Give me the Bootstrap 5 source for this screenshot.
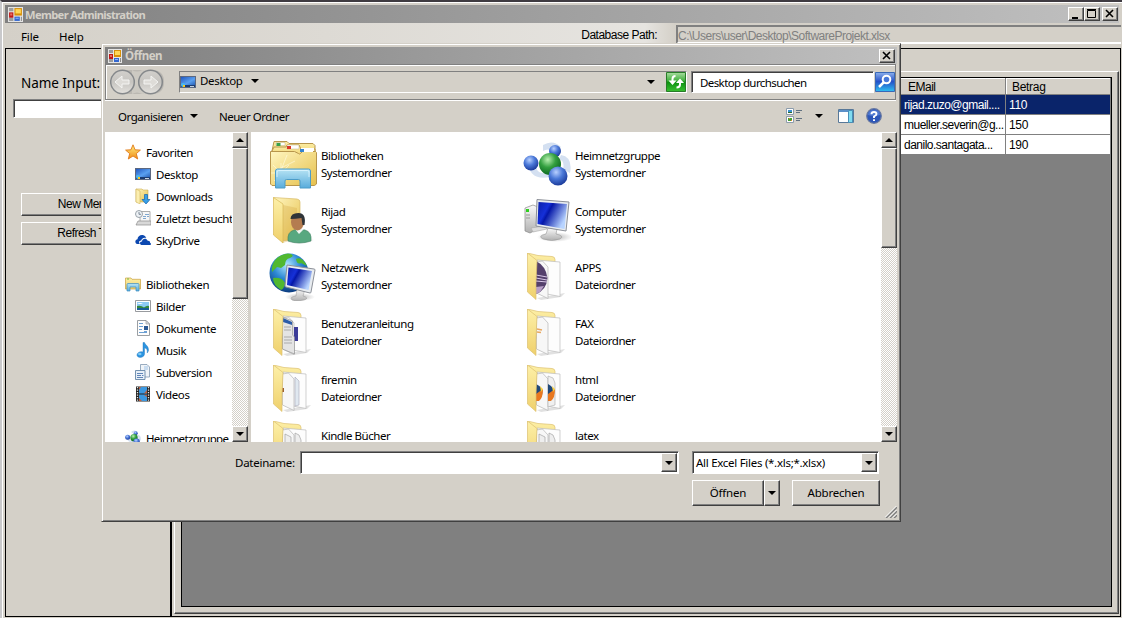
<!DOCTYPE html>
<html lang="de">
<head>
<meta charset="utf-8">
<title>Member Administration</title>
<meta name="viewport" content="width=device-width, initial-scale=1">
<link href="https://cdn.jsdelivr.net/npm/bootstrap@5.3.0/dist/css/bootstrap.min.css" rel="stylesheet">
<style>
:root{--face:#d4d0c8;--ui:"Noto Sans","Open Sans",sans-serif;--grid:"Liberation Sans",Arial,sans-serif}
body{width:1122px;height:618px;overflow:hidden;background:#d4d0c8;color:#000;font:11.5px/17px var(--ui);letter-spacing:-.45px;white-space:nowrap}
svg{flex:none;display:block}
.app{width:1122px;height:618px;border-top:2px solid #3f3b41;border-left:2px solid #c9c9cb}
.frame{border:1px solid #fff;border-right:0;border-bottom:0;padding:2px 1px 0 2px;background:var(--face)}
.caption{height:18px;background:linear-gradient(90deg,#808080,#c0c0c0);color:var(--face);font-weight:700;padding:0 2px 0 3px;gap:2px}
.frame>.caption{margin-right:2px;padding:0 1px 0 3px}
.cap-btn{width:16px;height:14px}
.raised{background:var(--face);border:1px solid;border-color:#fff #404040 #404040 #fff;box-shadow:inset -1px -1px #808080}
.sunken{background:#fff;border:1px solid;border-color:#808080 #fff #fff #808080;box-shadow:inset 1px 1px #404040}
.menu{height:25px;padding-left:16px;background:linear-gradient(90deg,#d4d0c8,#e6e4e0 640px,#d4d0c8 670px)}
.menu>span{padding-top:5px;letter-spacing:-.1px}
.arial,.menu>.arial{font-family:var(--grid);font-size:12px;letter-spacing:-.5px}
.path-box{width:445px;height:19px;margin-top:2px;border:2px solid;border-color:#808080 #fff #fff #808080;border-right:0;color:#808080;line-height:18px;background:var(--face)}
.work{border:1px solid #000;height:569px;width:1116px}
.left-pane{width:166px;border-right:2px solid #000;padding:24px 0 0 15px}
.name-label{font-size:13.5px;line-height:20px;letter-spacing:-.05px}
.name-box{height:19px;width:130px;margin:6px 0 0 -8px}
.wide-btn{width:140px;height:23px;line-height:21px}
.right-pane{padding:22px 1px 2px 2px}
.group{border:1px solid;border-color:#fff #404040 #404040 #fff;box-shadow:inset -1px -1px #808080;padding:5px 6px 6px 6px}
.grid-area{background:gray;border:1px solid #000}
.data{display:grid;grid-template-columns:110px 105px;grid-template-rows:17px repeat(3,20px)}
.data>div{border-right:1px solid gray;border-bottom:1px solid gray;background:#fff;padding-left:8px;line-height:20px}
.data>div:nth-child(even){padding-left:3px;letter-spacing:-.3px}
.data>.hd{background:var(--face);line-height:18px;padding-left:12px!important;box-shadow:inset 1px 1px #fff}
.data>.hd:nth-child(even){padding-left:6px!important}
.data>.sel{background:#0a246a;color:#fff}
.dialog{position:absolute;left:101px;top:43px;width:800px;height:479px;background:var(--face);border:1px solid;border-color:var(--face) #404040 #404040 var(--face);box-shadow:inset 1px 1px #fff,inset -1px -1px gray;padding:2px 3px}
.navrow{height:36px;border:1px solid gray;box-shadow:inset 1px 1px #fff,0 1px #fff;margin-right:1px;padding:0 0 0 4px}
.addr{width:508px;height:22px;border:1px solid;border-color:gray #fff #fff gray;margin-left:15px}
.tools{height:31px;padding:0 15px 0 13px}
.lists{height:310px}
.tree{width:127px;background:#fff;padding:9px 0 0 20px;overflow:hidden}
.tree>div{height:22px;display:flex;align-items:center;gap:5px;letter-spacing:-.4px}
.tree>.sub{padding-left:10px}
.bar{width:16px;background:repeating-conic-gradient(#fff 0 25%,#d4d0c8 0 50%) 0 0/2px 2px}
.bar .raised{width:16px;flex:none}
.files{background:#fff;overflow:hidden;padding:5px 0 0 18px;display:grid;grid-template-columns:254px 254px;grid-auto-rows:56px}
.files>div{display:flex;align-items:center;gap:4px}
.files span{margin-top:-2px}
.drop{width:16px;height:19px}
.tri{width:0;height:0;border:4px solid transparent;border-top-color:#000;border-bottom:0}
.tri.up{border-top:0;border-bottom:4px solid #000}
.foot-btn{height:26px;letter-spacing:-.2px;padding-bottom:1px}
.grip{right:3px;bottom:3px}
</style>
</head>
<body>
<svg width="0" height="0" class="position-absolute">
<defs>
<linearGradient id="yel" x1="0" x2="1" y2="1"><stop stop-color="#fff6c0"/><stop offset="1" stop-color="#e6c04c"/></linearGradient>
<linearGradient id="yel2" x1="0" x2="0" y2="1"><stop stop-color="#fdf0a8"/><stop offset="1" stop-color="#efd06c"/></linearGradient>
<linearGradient id="scr" x1="0" x2="1" y2=".5"><stop stop-color="#0a1ea8"/><stop offset=".35" stop-color="#1530d8"/><stop offset=".45" stop-color="#0416a8"/><stop offset="1" stop-color="#b8d4ff"/></linearGradient>
<linearGradient id="desk" x1="0" x2="1" y2="1"><stop stop-color="#2258c0"/><stop offset=".6" stop-color="#5aa0f0"/><stop offset="1" stop-color="#2a62b8"/></linearGradient>
<linearGradient id="cyan" x1="0" x2="0" y2="1"><stop stop-color="#b8e4f4"/><stop offset="1" stop-color="#58acdc"/></linearGradient>
<linearGradient id="silver" x1="0" x2="0" y2="1"><stop stop-color="#fafafa"/><stop offset="1" stop-color="#b0b0b0"/></linearGradient>
<linearGradient id="disc" x1="0" x2="0" y2="1"><stop stop-color="#d2d0cc"/><stop offset=".5" stop-color="#c6c4c0"/><stop offset="1" stop-color="#e4e2de"/></linearGradient>
<linearGradient id="btnG" x1="0" x2="0" y2="1"><stop stop-color="#a8dca0"/><stop offset=".45" stop-color="#3cae38"/><stop offset=".5" stop-color="#0c9010"/><stop offset="1" stop-color="#38c030"/></linearGradient>
<linearGradient id="btnB" x1="0" x2="0" y2="1"><stop stop-color="#8cb0ec"/><stop offset=".48" stop-color="#2450c8"/><stop offset="1" stop-color="#30c0f0"/></linearGradient>
<radialGradient id="ballB" cx=".4" cy=".3" r=".7"><stop stop-color="#b8d0ff"/><stop offset=".5" stop-color="#4a78d8"/><stop offset="1" stop-color="#1c3c9c"/></radialGradient>
<radialGradient id="ballG" cx=".4" cy=".3" r=".7"><stop stop-color="#b8f0b0"/><stop offset=".5" stop-color="#34a040"/><stop offset="1" stop-color="#0c6820"/></radialGradient>
<radialGradient id="globeF" cx=".45" cy=".3" r=".7"><stop stop-color="#b0e8ff"/><stop offset=".5" stop-color="#2c88d4"/><stop offset="1" stop-color="#0c3c80"/></radialGradient>
<linearGradient id="star" x1="0" x2="0" y2="1"><stop stop-color="#fff080"/><stop offset="1" stop-color="#f08c18"/></linearGradient>
<radialGradient id="shade"><stop stop-color="#888" stop-opacity=".6"/><stop offset="1" stop-color="#888" stop-opacity="0"/></radialGradient>

<symbol id="form" viewBox="0 0 14 14"><path fill="#e4e4e4" d="M0 0h14v14H0z"/><path fill="#9c9c9c" d="M1 1h4v3H1zM1 10h4v3H1z"/><path fill="#c01818" d="M1 5h4v5H1z"/><path fill="#e87060" d="M2 6h2v2H2z"/><path fill="#d89008" d="M6 1h7v7H6z"/><path fill="#ffd858" d="M7 2h5v4H7z"/><path fill="#3468d0" d="M6 9h5v4H6z"/><path fill="#90b8f8" d="M7 10h3v1H7z"/><path fill="#8c8c8c" d="M12 9h1v4h-1z"/></symbol>
<symbol id="deskI" viewBox="0 0 16 16"><path fill="#5c6880" d="M0 2h16v12H0z"/><path fill="url(#desk)" d="M1 3h14v8H1z"/><path fill="#1c3c70" d="M1 11h14v2H1z"/><path fill="#c8d4e0" d="M10 12h4v1h-4z"/><circle cx="3" cy="11" r="2" fill="#48b8f0"/><path fill="#f8c820" d="M3 11h2v2H3z"/></symbol>
<symbol id="starI" viewBox="0 0 16 16"><path fill="url(#star)" stroke="#e07818" stroke-width=".9" stroke-linejoin="round" d="M8 .8l2.100 5 5.300.3-4.100 3.500 1.400 5.400L8 12l-4.700 3 1.400-5.400L.6 6.100l5.300-.3z"/></symbol>
<symbol id="downI" viewBox="0 0 16 16"><path fill="url(#yel)" stroke="#cfae50" stroke-width=".6" d="M1 1h6l1 1h5v12H1z"/><path fill="#fbeeb0" stroke="#c8a84c" stroke-width=".5" d="M1 1l4 2v13l-4-2z"/><path fill="#38a0e8" stroke="#1464b0" stroke-width=".7" d="M9.500 6.500h3v5H15L11 16 7 11.500h2.500z"/></symbol>
<symbol id="recentI" viewBox="0 0 16 16"><path fill="#f6f6f6" stroke="#999" stroke-width=".8" d="M5 1.500h10v10H5z"/><path stroke="#80a8d0" d="M10 4.500h4M8 6.500h3M12 6.500h2M8 8.500h3"/><path fill="#d8d8d8" stroke="#8c8c8c" stroke-width=".7" d="M3 11h13v4H1z"/><circle cx="4" cy="4" r="3.500" fill="#eef2f6" stroke="#9098a0" stroke-width=".9"/><path stroke="#607080" stroke-width=".8" fill="none" d="M4 2v2.300h2"/></symbol>
<symbol id="skyI" viewBox="0 0 16 16"><path fill="#0c48b0" d="M1 11.500C-.6 9.500 1 7.300 2.500 7.300 2.600 4 6 2 9 3.400c1.400.6 2 1.600 2.300 2.700-3-1-4.800 1-5 2.500C3.800 8.500 3.500 11 5 12H2z"/><path fill="#0c48b0" d="M6.500 13C4.300 12.500 4.600 9.300 7 9.500 7.200 6.300 11.500 5.700 12.700 8.800c2-.2 2.500 1.200 2.300 1.900 1.500.6 1.200 2.300-.3 2.300z"/></symbol>
<symbol id="libI" viewBox="0 0 16 16"><path fill="url(#yel2)" stroke="#c8a040" stroke-width=".7" d="M.5 2h5.500l1 1.300h8.500V13H.5z"/><path fill="#78b840" d="M2 2.500h2v1H2z"/><path fill="url(#cyan)" stroke="#3c8cc0" stroke-width=".7" d="M2 15V8.500q0-1 1-1h10q1 0 1 1V15h-3v-4H5v4z"/></symbol>
<symbol id="picI" viewBox="0 0 16 16"><path fill="#fff" stroke="#8c9094" stroke-width=".9" d="M.5 2.500h15v11H.5z"/><path fill="#8ccaf4" d="M2 4h12v8H2z"/><path fill="#fff" d="M2 6q3-2 6 0z"/><path fill="#34883c" d="M2 8q4-1 7 1.500Q12 7 14 8v2H2z"/><path fill="#185c98" d="M2 10h12v2H2z"/></symbol>
<symbol id="docI" viewBox="0 0 16 16"><path fill="#fdfdfd" stroke="#909498" stroke-width=".9" d="M2.500.5H11L14.500 4v11.500h-12z"/><path fill="#d8dce0" stroke="#909498" stroke-width=".6" d="M11 .5V4h3.500z"/><path stroke="#4888c8" stroke-width=".8" d="M4 3.500h4M4 6.500h4M4 9.500h3M4 12.500h8M9 11.500h3"/><path fill="#2c5a94" d="M9 6h4v4H9z"/></symbol>
<symbol id="musI" viewBox="0 0 16 16"><path fill="#2c94e0" stroke="#1870b8" stroke-width=".4" d="M8 .5h1.500c.5 2.500 4.500 3.500 4 8-.2 1-.7 1.800-1.300 2.500.6-3-.7-4.700-2.700-5.200V12c0 4-7.500 4.600-7.500 1C2 10.300 5.500 9 8 10z"/><ellipse cx="4.800" cy="12" rx="1.700" ry="1.200" fill="#80ccf8"/></symbol>
<symbol id="svnI" viewBox="0 0 16 16"><path fill="#f0f4f8" stroke="#8098b0" stroke-width=".8" d="M5.500.5H12l2.500 2.500v10h-9z"/><path fill="#c8dcf0" d="M9 2h4v4H9z"/><path fill="#e8f0f8" stroke="#6888a8" stroke-width=".9" d="M.5 6.500H10v9H.5z"/><path stroke="#5078b0" stroke-width=".9" d="M2 9.500h6M2 11.500h4M7 11.500h1.500M2 13.500h6"/></symbol>
<symbol id="vidI" viewBox="0 0 16 16"><path fill="#222" d="M1 .5h14v15H1z"/><path fill="#3c98e0" d="M4 1h8v6.500H4zM4 8.500h8V15H4z"/><path fill="#c0603c" d="M4 1h2L4 4zM12 4v3.500H9zM4 12l3 3H4zM12 9v2l-3-2z"/><path stroke="#e8e8e8" stroke-width="1.300" stroke-dasharray="1.200 1.300" d="M2.500 1v14M13.500 1v14"/></symbol>
<symbol id="homeI" viewBox="0 0 48 48"><path fill="#b8cce8" opacity=".6" d="M20 4Q30-2 38 6L32 12Q26 6 20 10zM5 22q2 18 22 14L24 32Q12 34 12 20zM38 14q12 2 9 18L40 28q2-8-4-10z"/><circle cx="32" cy="10" r="6" fill="url(#ballB)"/><circle cx="8" cy="22" r="7.500" fill="url(#ballB)"/><circle cx="27" cy="23" r="11" fill="url(#ballG)"/><circle cx="35" cy="35" r="9.500" fill="url(#ballB)"/></symbol>
<symbol id="libBig" viewBox="0 0 48 48"><path fill="url(#yel2)" stroke="#b8964c" d="M3 10L5 .5h13l2 2h24l2 2v12z"/><path fill="url(#yel2)" stroke="#b8964c" d="M2 12l3-6h12l1-2h12l2 4h14v8z"/><path fill="#fff" stroke="#c0b080" stroke-width=".5" d="M7 1.500h9v3H7zM18 4h12v4H18z"/><path fill="#fff" d="M32 7h13v3H32z"/><path fill="url(#yel)" stroke="#b8964c" d="M1.500 10.500h24l4 2q1 1 2 0l2-2h13l1 1V43l-2 1.500H3L1.500 43z"/><path fill="#38a048" d="M7.500 2h4v3h-4z"/><path fill="#d83828" d="M18 5h4v3h-4z"/><path fill="#fff" d="M31 8h13v3H31z"/><path fill="#3484d0" d="M31 8h4v3h-4z"/><path stroke="#fffbe0" stroke-width=".8" opacity=".8" d="M2 32h20M12 22v19M4 24l15 15M20 24L5 40M6 30l20-10M11 32L18 14"/><path fill="url(#cyan)" stroke="#4c9cc8" d="M6.500 47V30q0-2 2-2h31q2 0 2 2v17H31v-7q0-1.500-1.500-1.500h-12Q16 38.500 16 40v7z"/><path stroke="#e0f6ff" opacity=".8" fill="none" d="M8 36v-5q0-1.500 1.500-1.500h29Q40 29.500 40 31v5"/></symbol>
<symbol id="userBig" viewBox="0 0 48 48"><ellipse cx="30" cy="43" rx="15" ry="4" fill="url(#shade)"/><path fill="url(#yel)" stroke="#d8bc68" stroke-width=".7" d="M4.500.5L28 2q3 .5 3 3v36L13 44z"/><path fill="#d8ac48" opacity=".35" d="M14 8l14 3v30l-14 5z"/><path fill="url(#yel2)" stroke="#d8b858" stroke-width=".7" d="M4.500.5L14 7v39L4.500 38z"/><path fill="#58a880" stroke="#3c8060" stroke-width=".6" d="M19 44q-1-9 6-11l5-1 6 1q7 2 6 11-12 4-23 0z"/><path fill="#f0f4f0" d="M26 32l4 5 5-5z"/><ellipse cx="28.500" cy="25" rx="6.500" ry="8.500" fill="#b47c50"/><path fill="#303438" d="M21.500 22q0-6 8-6 8 0 6 12h-2l-1-7q-6 1-11 1z"/></symbol>
<symbol id="netBig" viewBox="0 0 48 48"><circle cx="20" cy="20" r="19.500" fill="url(#globeF)"/><path fill="#50b830" d="M8 5q8-6 14-4 4 2-1 4-5 1-5 7l-4 3-4-1-5 5Q2 11 8 5zM4 25q9-1 12 5-1 6-4 7-8-5-8-12zM27 6q6-3 11 7l-6-3q-4 2-5-4z"/><ellipse cx="31" cy="44" rx="15" ry="4" fill="url(#shade)"/><path fill="url(#silver)" stroke="#999" stroke-width=".5" d="M28 36h8l-2 7q7 2 1 4-8 2-12 0-3-3 4-4z"/><path fill="#e8ecf0" stroke="#8c9098" d="M18 12l27 4q1 0 1 1l-4 22q0 1-1 1l-24-6q-1 0-1-1z"/><path fill="url(#scr)" d="M19.500 14.500L43 18l-3.500 19L18 32z"/></symbol>
<symbol id="pcBig" viewBox="0 0 48 48"><ellipse cx="32" cy="40" rx="18" ry="5" fill="url(#shade)"/><path fill="url(#silver)" stroke="#888" stroke-width=".7" d="M2 11l8-3 5 2v22L7 36l-5-2z"/><path fill="#30d020" d="M3 12h3v3H3z"/><path stroke="#999" d="M3 18h4M3 21h4"/><path fill="#ddd" stroke="#aaa" stroke-width=".6" d="M8 31l13-2 3 3-14 3z"/><path fill="url(#silver)" stroke="#999" stroke-width=".6" d="M25 31l9 1-1 5q9 2 4 5-8 3-17 0-6-3 3-5z"/><path fill="#e8ecf0" stroke="#8c9098" d="M14 2.500l32 2.500-3 29-30-5z"/><path fill="url(#scr)" d="M15.500 5L44 7l-2.500 25L14.500 27z"/></symbol>
<symbol id="folder" viewBox="0 0 48 48"><path fill="#aaa" opacity=".35" d="M14 45l28-5-4 4-20 3z"/><path fill="url(#yel2)" stroke="#dcc070" stroke-width=".7" d="M4.500 0L15 2.500l14 1q3 .3 3 3V30H14z"/><path fill="#fdfdfd" stroke="#bbb" stroke-width=".7" d="M14 7l23 2v34.500L24 41z"/><path fill="#f7f7f7" stroke="#b4b4b4" stroke-width=".7" d="M13.500 9l6-1 5.500 6v31.500L13.500 40z"/></symbol>
<symbol id="flap" viewBox="0 0 48 48"><path fill="url(#yel2)" stroke="#dcc070" stroke-width=".7" d="M4.500 0L14 7.500l-1 22v17L4.500 39z"/></symbol>
</defs>
</svg>

<div class="app position-relative">
<div class="frame h-100">
  <div class="caption d-flex align-items-center">
    <svg width="15" height="15"><use href="#form"/></svg>
    <span class="me-auto" style="font-size:11.2px;letter-spacing:-.65px">Member Administration</span>
    <div class="cap-btn raised" style="margin-right:-2px"><svg width="14" height="12"><path fill="#000" d="M3 9h6v2H3z"/></svg></div>
    <div class="cap-btn raised"><svg width="14" height="12"><path fill="none" stroke="#000" d="M2.500 2.500h8v7h-8zM2 1.500h9"/></svg></div>
    <div class="cap-btn raised"><svg width="14" height="12"><path fill="none" stroke="#000" stroke-width="1.600" d="M3 2l7 7M10 2l-7 7"/></svg></div>
  </div>
  <div class="menu d-flex">
    <span style="width:38px">File</span><span>Help</span>
    <span class="arial ms-auto" style="padding-top:4px;margin-right:19px">Database Path:</span>
    <div class="path-box arial">C:\Users\user\Desktop\SoftwareProjekt.xlsx</div>
  </div>
  <div class="work d-flex">
    <div class="left-pane">
      <div class="name-label">Name Input:</div>
      <div class="name-box sunken"></div>
      <div class="wide-btn raised text-center arial" style="margin-top:75px">New Member</div>
      <div class="wide-btn raised text-center arial" style="margin-top:6px">Refresh Table</div>
    </div>
    <div class="right-pane flex-grow-1 d-flex">
      <div class="group flex-grow-1 d-flex">
        <div class="grid-area flex-grow-1 d-flex justify-content-end align-items-start arial">
          <div class="data">
            <div class="hd">EMail</div><div class="hd">Betrag</div>
            <div class="sel">rijad.zuzo@gmail....</div><div class="sel">110</div>
            <div>mueller.severin@g...</div><div>150</div>
            <div>danilo.santagata...</div><div>190</div>
          </div>
        </div>
      </div>
    </div>
  </div>
</div>
</div>

<div class="dialog">
  <div class="caption d-flex align-items-center" style="margin-top:1px;height:17px">
    <svg width="14" height="14"><use href="#form"/></svg>
    <span class="me-auto" style="margin-left:1px">Öffnen</span>
    <div class="cap-btn raised"><svg width="14" height="12"><path fill="none" stroke="#000" stroke-width="1.600" d="M3 2l7 7M10 2l-7 7"/></svg></div>
  </div>
  <div class="navrow d-flex align-items-center">
    <svg width="54" height="28" viewBox="0 0 54 28"><path fill="#bbb8b2" d="M12 2h30q12 0 12 12T42 26H12z"/><path fill="#ccc9c2" d="M22 2q5 3 10 0h6v24h-6q-5-3-10 0z"/><g fill="url(#disc)" stroke="#85888b" stroke-width="1.500"><circle cx="12.500" cy="14" r="11.800"/><circle cx="40.500" cy="14" r="11.800"/></g><g fill="#dedcd8" stroke="#f4f4f2"><path d="M5 14l7-6v4h7v4h-7v4zM48 14l-7-6v4h-7v4h7v4z"/></g></svg>
    <div class="addr d-flex align-items-center">
      <svg width="16" height="16"><use href="#deskI"/></svg>
      <span style="margin:-3px 8px 0 4px;letter-spacing:-.3px">Desktop</span><i class="tri" style="margin-top:-2px"></i>
      <i class="tri ms-auto" style="margin-right:11px"></i>
      <svg width="20" height="20" viewBox="0 0 20 20"><path fill="url(#btnG)" stroke="#287c28" d="M.5.500h19v19H.5z"/><path fill="none" stroke="#fff" stroke-width="2" d="M9.500 4Q6.500 4 6.500 7v3M10.500 15.500q3.500 0 3.500-3V10"/><path fill="#fff" d="M2.500 8.500h8l-4 4.500zM10 11h8l-4-4.500z"/></svg>
    </div>
    <div class="sunken d-flex align-items-center" style="width:183px;height:22px;margin-left:4px;padding:1px 0 0 8px;letter-spacing:-.6px">Desktop durchsuchen</div>
    <svg width="20" height="20" viewBox="0 0 20 20" style="margin-left:1px"><path fill="url(#btnB)" stroke="#3868b8" d="M.5.500h19v19H.5z"/><circle cx="11.500" cy="7.500" r="3.800" fill="#4878d8" stroke="#fff" stroke-width="2"/><path stroke="#fff" stroke-width="2.500" d="M8.500 10.500L4 15"/></svg>
  </div>
  <div class="tools d-flex align-items-center" style="height:32px">
    <span>Organisieren</span><i class="tri" style="margin-left:7px"></i>
    <span style="margin-left:21px">Neuer Ordner</span>
    <svg class="ms-auto" width="16" height="16" viewBox="0 0 16 16"><path fill="#fff" stroke="#8c9cac" d="M.5.500h7v6h-7zM.5 8.500h7v6h-7z"/><path fill="#3890d0" d="M2 2h4v2H2z"/><path fill="#286830" d="M2 4h4v1H2z"/><path fill="#48a030" d="M2 10h4v3H2z"/><path fill="#e08030" d="M3 10h1v1H3zM5 12h1v1H5z"/><path stroke="#607080" d="M10 2.500h6M10 4.500h4M10 10.500h6M10 12.500h4"/></svg>
    <i class="tri" style="margin-left:13px"></i>
    <svg width="16" height="14" viewBox="0 0 16 14" style="margin-left:15px"><path fill="#fff" stroke="#587898" d="M.5.500h15v13H.5z"/><path fill="#5c90c8" d="M1 1h14v2H1z"/><path fill="#80dcf0" stroke="#4890b8" d="M10.500 1.500h4v12h-4z"/></svg>
    <svg width="16" height="16" viewBox="0 0 16 16" style="margin-left:12px"><circle cx="8" cy="8" r="7.300" fill="#2c56b8" stroke="#6878a0" stroke-width="1.200"/><path fill="#6890e0" opacity=".6" d="M2 7q0-5 6-5t6 5q-6 2-12 0z"/><path fill="none" stroke="#fff" stroke-width="1.900" d="M5.500 6.200Q5.500 4 8 4t2.500 2Q10.500 7.200 8 8.500V10M8 11.200V13"/></svg>
  </div>
  <div class="lists d-flex">
    <div class="tree">
      <div><svg width="16" height="16"><use href="#starI"/></svg>Favoriten</div>
      <div class="sub"><svg width="16" height="16"><use href="#deskI"/></svg>Desktop</div>
      <div class="sub"><svg width="16" height="16"><use href="#downI"/></svg>Downloads</div>
      <div class="sub"><svg width="16" height="16"><use href="#recentI"/></svg>Zuletzt besucht</div>
      <div class="sub"><svg width="16" height="16"><use href="#skyI"/></svg>SkyDrive</div>
      <div></div>
      <div><svg width="16" height="16"><use href="#libI"/></svg>Bibliotheken</div>
      <div class="sub"><svg width="16" height="16"><use href="#picI"/></svg>Bilder</div>
      <div class="sub"><svg width="16" height="16"><use href="#docI"/></svg>Dokumente</div>
      <div class="sub"><svg width="16" height="16"><use href="#musI"/></svg>Musik</div>
      <div class="sub"><svg width="16" height="16"><use href="#svnI"/></svg>Subversion</div>
      <div class="sub"><svg width="16" height="16"><use href="#vidI"/></svg>Videos</div>
      <div></div>
      <div style="letter-spacing:-.65px"><svg width="16" height="16"><use href="#homeI"/></svg>Heimnetzgruppe</div>
    </div>
    <div class="bar d-flex flex-column">
      <div class="raised d-flex align-items-center justify-content-center" style="height:16px"><i class="tri up"></i></div>
      <div class="raised" style="height:151px"></div>
      <div class="raised d-flex align-items-center justify-content-center mt-auto" style="height:16px"><i class="tri"></i></div>
    </div>
    <div class="files flex-grow-1" style="margin-left:3px">
      <div><svg width="48" height="48"><use href="#libBig"/></svg><span>Bibliotheken<br>Systemordner</span></div>
      <div><svg width="48" height="48"><use href="#homeI"/></svg><span>Heimnetzgruppe<br>Systemordner</span></div>
      <div><svg width="48" height="48"><use href="#userBig"/></svg><span>Rijad<br>Systemordner</span></div>
      <div><svg width="48" height="48"><use href="#pcBig"/></svg><span>Computer<br>Systemordner</span></div>
      <div><svg width="48" height="48"><use href="#netBig"/></svg><span>Netzwerk<br>Systemordner</span></div>
      <div><svg width="48" height="48"><use href="#folder"/><path fill="#54406c" d="M13 8q10 5 11.500 17-1 12-11.500 16z"/><path stroke="#d8c8e8" d="M13 22l11 2M13 25l11 2M13 28l11 1"/><path fill="#b8a0c8" d="M13 34l8-1-4 6-4 2z"/><use href="#flap"/></svg><span>APPS<br>Dateiordner</span></div>
      <div><svg width="48" height="48"><use href="#folder"/><path fill="#3c3c98" d="M25 18h4v14h-4z"/><path fill="#e4e4e4" stroke="#888" stroke-width=".6" d="M13.500 8l10 4v14l2 2v17l-12-5z"/><path fill="#2c5ca8" d="M14 9l9 4v3l-9-3z"/><path stroke="#aaa" d="M15 18h7M15 21h7M15 28h8M15 31h8M15 34h8"/><use href="#flap"/></svg><span>Benutzeranleitung<br>Dateiordner</span></div>
      <div><svg width="48" height="48"><use href="#folder"/><path stroke="#e8a860" stroke-width="1.500" d="M14 20l5 1M14 23l4 .5"/><use href="#flap"/></svg><span>FAX<br>Dateiordner</span></div>
      <div><svg width="48" height="48"><use href="#folder"/><path fill="#e0e8f0" stroke="#aab" stroke-width=".6" d="M26 12l4 4v24l-4 1z"/><path fill="#9c6030" d="M13 23h2v4h-2z"/><use href="#flap"/></svg><span>firemin<br>Dateiordner</span></div>
      <div><svg width="48" height="48"><use href="#folder"/><path fill="#f0f0f0" stroke="#aaa" stroke-width=".6" d="M25 11l5 2 2 5v22l-7 2z"/><path fill="#204878" d="M13 19q8 3 6 12l-6 2zM25 19q7 3 6 12l-6 2z"/><path fill="#e87820" d="M13 29l7-5q0 9-4 12h-3zM25 29l7-5q0 9-4 12h-3z"/><path fill="#f8d040" d="M17 21l3 3-2 3zM29 21l3 3-2 3z"/><use href="#flap"/></svg><span>html<br>Dateiordner</span></div>
      <div><svg width="48" height="48"><use href="#folder"/><path fill="#eee" stroke="#999" stroke-width=".6" d="M16 13l6 3v24l-6-2zM26 12l4 2 2 5v20h-6z"/><use href="#flap"/></svg><span>Kindle Bücher<br>Dateiordner</span></div>
      <div><svg width="48" height="48"><use href="#folder"/><path fill="#eee" stroke="#999" stroke-width=".6" d="M16 13l6 3v24l-6-2zM26 12l4 2 2 5v20h-6z"/><use href="#flap"/></svg><span>latex<br>Dateiordner</span></div>
    </div>
    <div class="bar d-flex flex-column">
      <div class="raised d-flex align-items-center justify-content-center" style="height:16px"><i class="tri up"></i></div>
      <div class="raised" style="height:100px"></div>
      <div class="raised d-flex align-items-center justify-content-center mt-auto" style="height:16px"><i class="tri"></i></div>
    </div>
  </div>
  <div class="d-flex" style="margin:9px 18px 0 130px">
    <span style="padding-top:3px;width:65px;letter-spacing:-.25px">Dateiname:</span>
    <div class="sunken d-flex justify-content-end" style="width:379px;height:23px;padding:1px">
      <div class="drop raised d-flex align-items-center justify-content-center"><i class="tri"></i></div>
    </div>
    <div class="sunken d-flex ms-auto" style="width:187px;height:23px;padding:1px 1px 0 3px">
      <span class="me-auto" style="padding-top:1px;letter-spacing:-.28px">All Excel Files (*.xls;*.xlsx)</span>
      <div class="drop raised d-flex align-items-center justify-content-center"><i class="tri"></i></div>
    </div>
  </div>
  <div class="d-flex justify-content-end" style="margin:6px 17px 0 0">
    <div class="foot-btn raised d-flex align-items-center justify-content-center" style="width:72px">Öffnen</div>
    <div class="foot-btn raised d-flex align-items-center justify-content-center" style="width:16px"><i class="tri"></i></div>
    <div class="foot-btn raised d-flex align-items-center justify-content-center" style="width:88px;margin-left:12px">Abbrechen</div>
  </div>
  <svg class="grip position-absolute" width="12" height="12"><path stroke="#808080" stroke-width="1.600" d="M1 12L12 1M5 12l7-7M9 12l3-3"/><path stroke="#fff" d="M0 11.500L11.500 0M4 11.500L11.500 4M8 11.500L11.500 8"/></svg>
</div>
<script src="https://cdn.jsdelivr.net/npm/bootstrap@5.3.0/dist/js/bootstrap.bundle.min.js"></script>
</body>
</html>
